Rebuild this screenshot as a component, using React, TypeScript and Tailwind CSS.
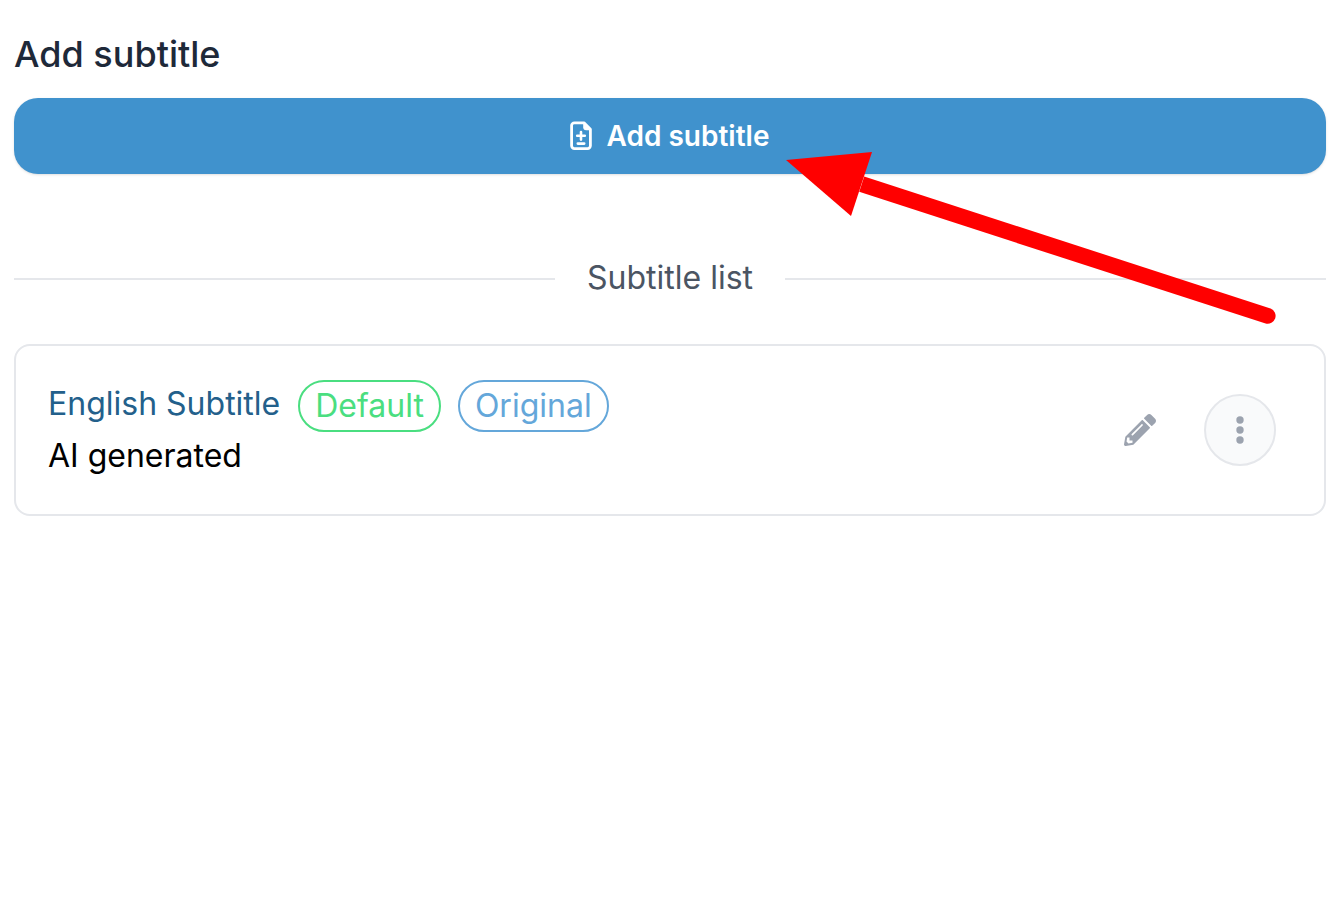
import { FaPencilAlt } from "react-icons/fa";

function FileDiffIcon() {
  return (
    <svg width="24" height="30" viewBox="0 0 24 30" fill="none" stroke="currentColor" aria-hidden="true">
      <path
        d="M15 1.8H5.4A2.8 2.8 0 0 0 2.6 4.6V24.8A2.8 2.8 0 0 0 5.4 27.6H18.6A2.8 2.8 0 0 0 21.4 24.8V8.2Z"
        strokeWidth="2.8"
        strokeLinejoin="round"
      />
      <path d="M14.2 1.4 22 9.2H17.2A3 3 0 0 1 14.2 6.2Z" fill="currentColor" stroke="none" />
      <path d="M12 11V18.6M8.2 14.8H15.8M8.8 22.6H15.2" strokeWidth="2.6" strokeLinecap="round" />
    </svg>
  );
}

function Badge({ label, tone }: { label: string; tone: string }) {
  return (
    <span className={`flex h-[52px] items-center rounded-full border-2 px-[15px] ${tone}`}>{label}</span>
  );
}

function Rule() {
  return <span className="mt-0.5 h-0.5 flex-1 bg-gray-200" />;
}

function PointerArrow() {
  return (
    <svg
      className="pointer-events-none absolute top-[150px] left-[784px]"
      width="496"
      height="178"
      viewBox="784 150 496 178"
      aria-hidden="true"
    >
      <path d="M786 160 872 152 851 216Z" fill="#f00" />
      <path d="M864.2 176.5 1270.5 308.4A8 8 0 0 1 1265.6 323.6L859.2 191.8Z" fill="#f00" />
    </svg>
  );
}

export default function App() {
  return (
    <main className="relative min-h-screen bg-white pt-7 pr-2.5 pl-3.5 font-['Inter',sans-serif] text-[32px] leading-[48px] text-black">
      <h1 className="text-4xl leading-[52px] font-medium text-gray-800">Add subtitle</h1>
      <button
        type="button"
        className="mt-[18px] flex h-[76px] w-full items-center justify-center gap-3.5 rounded-3xl bg-[#4092cd] pr-0.5 text-[28px] leading-10 font-semibold text-white shadow-sm"
      >
        <FileDiffIcon />
        Add subtitle
      </button>

      <section className="mt-20">
        <div className="flex items-center gap-8">
          <Rule />
          <h2 className="text-[#4b5563]">Subtitle list</h2>
          <Rule />
        </div>

        <article className="mt-[42px] flex items-center justify-between rounded-2xl border-2 border-gray-200 py-[34px] pr-12 pl-8">
          <div>
            <div className="flex items-start gap-[18px]">
              <a href="#english" className="text-[#23608b]">English Subtitle</a>
              <div className="flex gap-[17px]">
                <Badge label="Default" tone="border-[#4ade80] text-[#4ade80]" />
                <Badge label="Original" tone="border-[#64a7da] text-[#64a7da]" />
              </div>
            </div>
            <p>AI generated</p>
          </div>
          <div className="flex items-center gap-12 text-[#9ca3af]">
            <button type="button" aria-label="Edit subtitle">
              <FaPencilAlt className="size-8" />
            </button>
            <button
              type="button"
              aria-label="More options"
              className="flex size-[72px] items-center justify-center rounded-full border-2 border-gray-200 bg-gray-50"
            >
              <svg width="8" height="28" viewBox="0 0 8 28" fill="currentColor" aria-hidden="true">
                <circle cx="4" cy="4" r="3.7" />
                <circle cx="4" cy="14" r="3.7" />
                <circle cx="4" cy="24" r="3.7" />
              </svg>
            </button>
          </div>
        </article>
      </section>
      <PointerArrow />
    </main>
  );
}
